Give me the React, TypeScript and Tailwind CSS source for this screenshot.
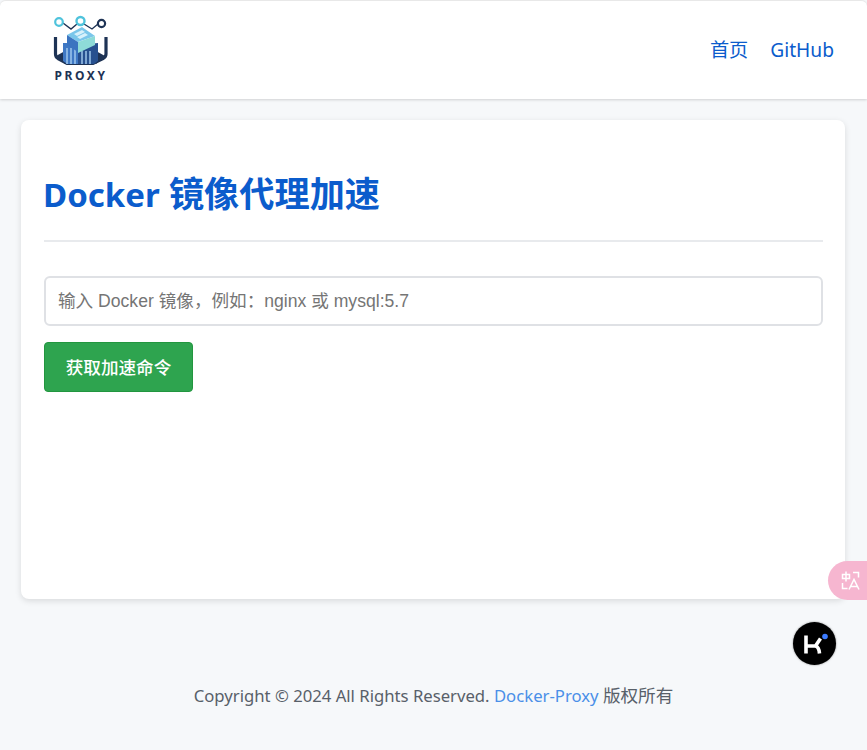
import React from "react";

const Logo = () => (
  <div className="flex flex-col items-center w-[62px]">
    <svg width="62" height="54" viewBox="0 0 62 54" className="block">
      <path d="M5.5 22 V39 Q5.5 42 8 43.5 L17 48.5 H43 L53 43.5 Q56 42 56 39 V22" fill="none" stroke="#1e3355" strokeWidth="3.2" />
      <path d="M6 41 L15 36 L15 49 Z M55 41 L46 36 L46 49 Z" fill="#1e3355" />
      <path d="M13 8 L21 14 L27 9 M34 9 L42 14 L48 9" fill="none" stroke="#1e3355" strokeWidth="1.4" />
      <circle cx="9" cy="7" r="3.8" fill="#fff" stroke="#4fc3dc" strokeWidth="2.2" />
      <circle cx="30.5" cy="6" r="4" fill="#fff" stroke="#4fc3dc" strokeWidth="2.4" />
      <circle cx="51.5" cy="8.5" r="3.6" fill="#fff" stroke="#1e3355" strokeWidth="2.2" />
      <path d="M13 28 H28 V49 H17 L13 46 Z" fill="#3f78c4" />
      <path d="M28 30 L48 28 V46 L44 49 H28 Z" fill="#27508f" />
      <path d="M17 33 V49 M21 33 V49 M25 33 V49 M32 36 V49 M36 36 V49 M40 36 V49" stroke="#a6cdf0" strokeWidth="1.4" />
      <path d="M32 12 L45 21 L28 27 L17 20 Z" fill="#7ac6ea" />
      <path d="M17 20 L28 27 V37 L17 30 Z" fill="#3b74c0" />
      <path d="M28 27 L45 21 V30 L28 38 Z" fill="#8edbd8" />
      <path d="M24 19 L32 15 L35 17 L27 21 Z M27 22 L35 18 L38 20 L30 24 Z" fill="#d8f1fb" />
    </svg>
    <span className="text-[12px] leading-[13px] font-bold tracking-[2.6px] text-[#1e3355] font-['Noto_Sans',sans-serif]">PROXY</span>
  </div>
);

export default function App() {
  return (
    <div className="relative h-[750px] overflow-hidden bg-[#f6f8fa] font-['Noto_Sans','Noto_Sans_CJK_SC',sans-serif]">
      <header className="flex h-[99px] items-start justify-between rounded-t-[6px] border-t border-[#e8e8e8] bg-white pl-[50px] pr-[33px] pt-[14px] shadow-[0_1px_3px_rgba(0,0,0,0.16)]">
        <Logo />
        <nav className="mt-[21px] flex gap-[22px] text-[19.2px] text-[#0b5ccc]">
          <a>首页</a>
          <a>GitHub</a>
        </nav>
      </header>
      <main className="ml-[21px] mr-[22px] mt-[21px] flex h-[479px] flex-col rounded-[8px] bg-white pl-[23px] pr-[22px] pt-[47px] shadow-[0_2px_6px_rgba(0,0,0,0.12)]">
        <h1 className="border-b-2 border-[#e8eaed] pb-[19px] text-[35.2px] font-bold leading-[52px] text-[#0b5ccc] [text-indent:-1px]"><span className="text-[33px]">Docker</span> 镜像代理加速</h1>
        <input
          readOnly
          placeholder="输入 Docker 镜像，例如：nginx 或 mysql:5.7"
          className="mt-[34px] h-[50px] w-full rounded-[6px] border-2 border-[#dfe1e5] bg-white px-[12px] font-['Liberation_Sans','Noto_Sans_CJK_SC',sans-serif] text-[17.6px] placeholder:text-[#757575] outline-none"
        />
        <button className="mt-[16px] h-[50px] w-[149px] rounded-[4px] border border-[#22963f] bg-[#2ea44f] text-[17.6px] font-medium text-white">获取加速命令</button>
      </main>
      <footer className="mt-[84px] text-center text-[16.7px] leading-[24px] text-[#586069]">
        Copyright © 2024 All Rights Reserved. <a className="text-[#4a8fe8]">Docker-Proxy</a> <span className="text-[17.6px]">版权所有</span>
      </footer>
      <div className="absolute right-0 top-[561px] h-[39px] w-[39px] rounded-l-[20px] bg-[#f6b6d0]">
        <svg width="39" height="39" viewBox="0 0 39 39" fill="none" stroke="#fff" strokeWidth="1.5">
          <path d="M14.5 13.5 H21.5 V17.5 H14.5 Z M18 10.5 V20.5" />
          <path d="M25 11.5 H30.5 V16.5" />
          <path d="M14.5 22 V27.5 H19.5" />
          <path d="M21 28.5 L26 18.5 L31 28.5 M22.8 25.5 H29.2" />
        </svg>
      </div>
      <div className="absolute left-[793px] top-[622px] h-[43px] w-[43px] rounded-full bg-black shadow-[0_0_2px_rgba(0,0,0,0.5)]">
        <svg width="43" height="43" viewBox="0 0 43 43" fill="none" stroke="#fff" strokeWidth="3.6">
          <path d="M13 13.5 V31.5 M13 24 H22.5 L27.5 16.5 M22.5 24 Q26 25 26.5 31.5" />
          <circle cx="32" cy="14.5" r="2.8" fill="#3b7bff" stroke="none" />
        </svg>
      </div>
    </div>
  );
}
